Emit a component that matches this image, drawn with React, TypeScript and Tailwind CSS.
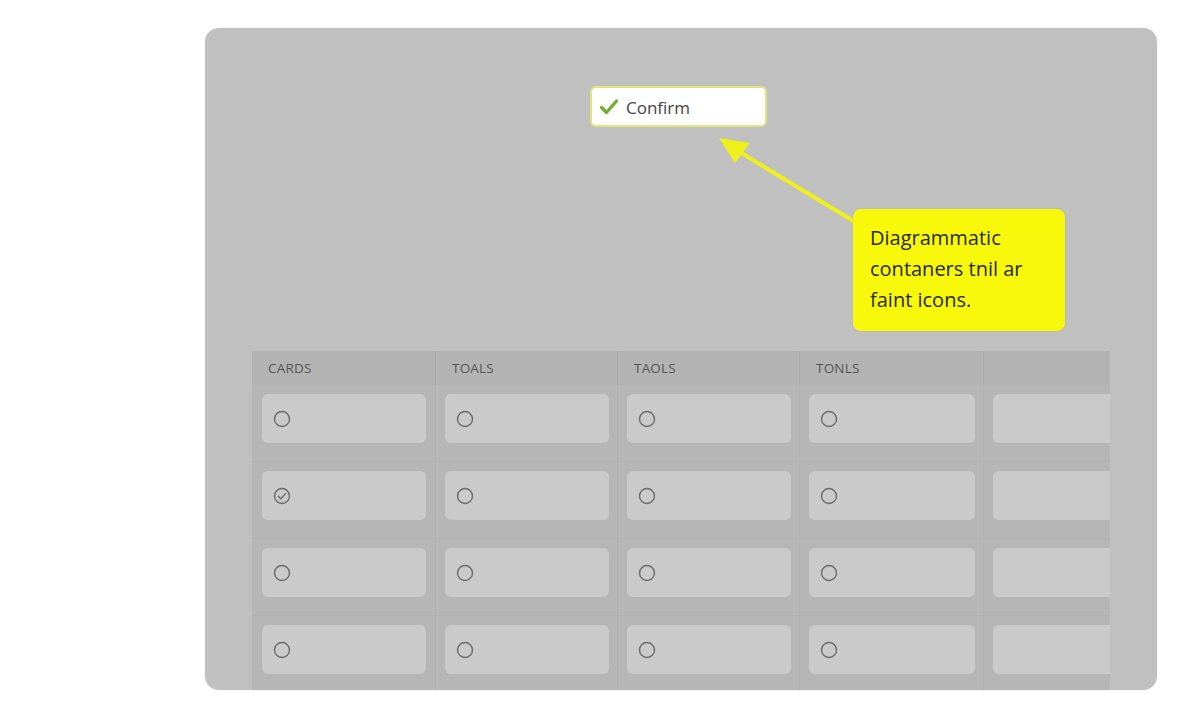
import React from "react";

const font = { fontFamily: '"Open Sans", "Liberation Sans", sans-serif' };

function Circle({ checked }: { checked?: boolean }) {
  return (
    <svg width="18" height="18" viewBox="0 0 18 18" className="shrink-0">
      <circle cx="9" cy="9" r="7.5" fill="none" stroke="#6a6a6a" strokeWidth="1.4" />
      {checked && (
        <path d="M5.2 9.2 L7.9 11.8 L12.6 6.6" fill="none" stroke="#6a6a6a" strokeWidth="1.4" strokeLinecap="round" strokeLinejoin="round" />
      )}
    </svg>
  );
}

const headers = ["CARDS", "TOALS", "TAOLS", "TONLS", ""];

export default function App() {
  const rows = [0, 1, 2, 3];
  return (
    <div className="w-[1200px] h-[720px] bg-white overflow-hidden" style={font}>
      <div className="pt-[28px] pl-[205px]">
        <div className="relative w-[952px] h-[662px] bg-[#c0c0c0] rounded-[14px] overflow-hidden shadow-[0_0_3px_rgba(0,0,0,0.08)]">
          {/* upper area */}
          <div className="relative h-[323px]">
            <div className="pt-[58px] pl-[385px]">
              <div className="w-[177px] h-[41px] bg-white border-2 border-[#dde67a] rounded-[6px] flex items-center pl-[6px] gap-[6px]">
                <svg width="22" height="22" viewBox="0 0 22 22">
                  <path d="M3.5 11.5 L8.5 16.5 L18.5 5" fill="none" stroke="#6fae2c" strokeWidth="3.2" strokeLinecap="round" strokeLinejoin="round" />
                </svg>
                <span className="text-[17px] text-[#444] leading-none pt-[1px]">Confirm</span>
              </div>
            </div>
            {/* arrow */}
            <svg className="absolute left-0 top-0" width="952" height="323" viewBox="0 0 952 323">
              <line x1="650" y1="194" x2="538" y2="126" stroke="#eef01c" strokeWidth="4" strokeLinecap="round" />
              <polygon points="514,110 545,115 530,135" fill="#eef01c" />
            </svg>
            {/* callout */}
            <div className="absolute left-[648px] top-[181px] w-[212px] h-[122px] bg-[#f8f80a] rounded-[8px] shadow-[0_0_2px_rgba(0,0,0,0.1)] pl-[17px] pt-[13px]">
              <p className="text-[20px] leading-[31px] text-[#2a2a1a]">
                Diagrammatic
                <br />
                contaners tnil ar
                <br />
                faint icons.
              </p>
            </div>
          </div>
          {/* table */}
          <div className="ml-[47px] w-[858px] bg-[#b6b6b6] grid grid-cols-[184px_182px_182px_184px_126px]">
            {headers.map((h, i) => (
              <div
                key={"h" + i}
                className={`h-[34px] bg-[#b3b3b3] flex items-center pl-[16px] text-[13.5px] text-[#555] tracking-[0.2px] ${i < 4 ? "border-r border-[#ababab]" : ""}`}
              >
                {h}
              </div>
            ))}
            {rows.map((r) =>
              headers.map((_, c) => (
                <div
                  key={r + "-" + c}
                  className={`h-[77px] pt-[9px] ${c === 0 ? "pl-[10px] pr-[9px]" : c === 4 ? "pl-[9px]" : "pl-[9px] pr-[8px]"} ${c < 4 ? "border-r border-[#ababab]" : ""} border-b border-[#b1b1b1]`}
                >
                  <div className={`h-[49px] bg-[#cacaca] flex items-center pl-[11px] ${c === 4 ? "rounded-l-[6px]" : "rounded-[6px]"}`}>
                    {c < 4 && <Circle checked={r === 1 && c === 0} />}
                  </div>
                </div>
              ))
            )}
          </div>
        </div>
      </div>
    </div>
  );
}
